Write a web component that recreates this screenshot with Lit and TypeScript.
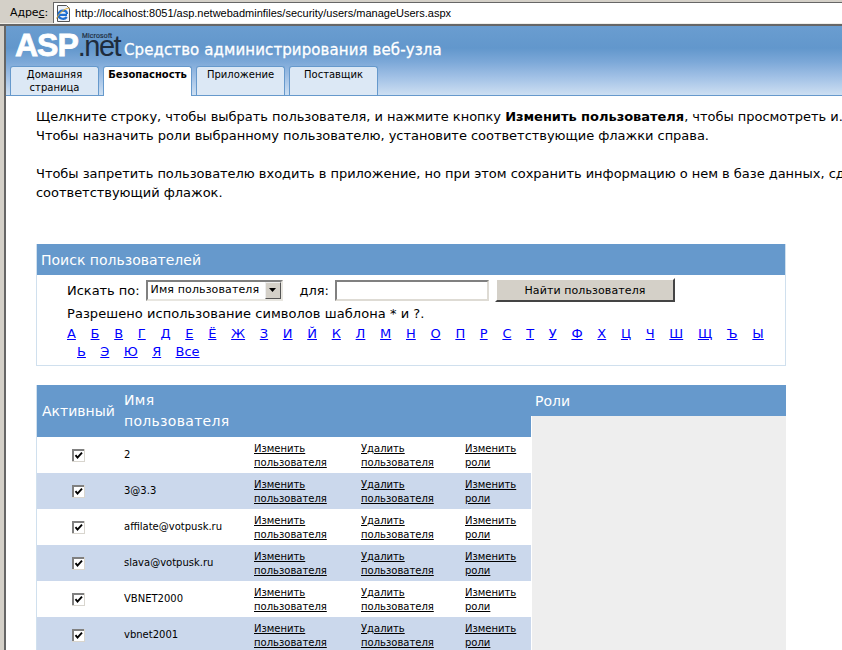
import { LitElement, html, css } from "lit";
import { customElement } from "lit/decorators.js";

const L1 = ["А","Б","В","Г","Д","Е","Ё","Ж","З","И","Й","К","Л","М","Н","О","П","Р","С","Т","У","Ф","Х","Ц","Ч","Ш","Щ","Ъ","Ы"];
const L2 = ["Ь","Э","Ю","Я","Все"];
const USERS = ["2","3@3.3","affilate@votpusk.ru","slava@votpusk.ru","VBNET2000","vbnet2001"];

@customElement("app-root")
export class AppRoot extends LitElement {
  static styles = css`
    :host { display: block; width: 842px; height: 650px; overflow: hidden; background: #d4d0c8;
      font-family: "DejaVu Sans", Verdana, sans-serif; font-size: 13px; letter-spacing: -.03px; color: #000; }
    .addr { height: 23px; background: #d4d0c8; display: flex; padding: 2px 0 0 10px; box-sizing: border-box; gap: 5px; }
    .addr-label { font-size: 11px; line-height: 21px; letter-spacing: -.1px; }
    .addr-label u { text-decoration: underline; }
    .addr-box { flex: 1; height: 21px; box-sizing: border-box; background: #fff; border-top: 1px solid #666; border-left: 1px solid #666; display: flex; align-items: center; gap: 3px; padding-left: 1px; font: 11px "Liberation Sans", sans-serif; letter-spacing: 0; }
    .sep { height: 3px; background: #efeee9; border-bottom: 2px solid #666; box-sizing: border-box; }
    .page { padding-left: 4px; background: #d4d0c8; }
    .frame { border-left: 2px solid #666; background: #fff; height: 624px; overflow: hidden; }
    .head { height: 70px; background: linear-gradient(#6a9dd0 0, #6297cc 32%, #7ca8d8 52%, #a3c2e6 75%, #cddff2 100%); border-bottom: 1px solid #6699cc; box-sizing: border-box; display: flex; flex-direction: column; justify-content: space-between; }
    .brand { display: flex; align-items: flex-end; padding-left: 9px; height: 34px; box-sizing: border-box; }
    .logo { position: relative; display: block; width: 109px; height: 30px; white-space: nowrap; flex: none; }
    .logo-asp { font: 900 32px/30px "Liberation Sans", sans-serif; color: #fff; letter-spacing: -1px; -webkit-text-stroke: .8px #fff; }
    .logo-net { font: 29px/30px "Liberation Sans", sans-serif; color: #1e2c3c; letter-spacing: -1.5px; }
    .logo-ms { position: absolute; left: 67px; top: 2px; font: 7px/7px "Liberation Sans", sans-serif; color: #1e2c3c; letter-spacing: .2px; -webkit-text-stroke: .2px #1e2c3c; }
    .title { color: #fff; font-size: 15px; line-height: 20px; letter-spacing: .1px; -webkit-text-stroke: .3px #fff; }
    .tabs { display: flex; gap: 4px; padding-left: 4px; height: 29px; }
    .tab { width: 89px; height: 29px; background: #dce8f5; border: 1px solid #6699cc; border-bottom: none; border-radius: 3px 3px 0 0; box-sizing: border-box; text-align: center; font-size: 10px; line-height: 13px; padding-top: 1px; letter-spacing: 0; }
    .tab.active { background: #fff; font-weight: 700; height: 30px; }
    .body { padding: 11px 0 0 30px; width: 860px; }
    p { margin: 0; white-space: nowrap; line-height: 19px; }
    .gap { height: 19px; }
    .panel { width: 750px; border: 1px solid #d0e0ee; border-top: none; margin-top: 42px; box-sizing: border-box; }
    .bar { background: #6699cc; color: #fff; font-size: 14px; height: 31px; line-height: 32px; padding-left: 4px; letter-spacing: 0; }
    .form { padding: 3px 0 4px 0; }
    .line1 { display: flex; align-items: center; height: 24px; padding-left: 30px; }
    .select { width: 137px; height: 21px; box-sizing: border-box; margin-left: 6px; border: 2px solid; border-color: #808080 #e8e6e0 #e8e6e0 #808080; background: #fff; display: flex; justify-content: space-between; font-size: 11px; line-height: 16px; padding-left: 3px; letter-spacing: .12px; }
    .arrow { width: 16px; height: 17px; box-sizing: border-box; background: #d4d0c8; border: 1px solid; border-color: #eee #555 #555 #eee; display: flex; align-items: center; justify-content: center; }
    .for { margin: 0 6px 0 17px; }
    input[type=text] { width: 154px; height: 21px; box-sizing: border-box; border: 2px solid; border-color: #808080 #dedbd4 #dedbd4 #808080; padding: 0; outline: none; }
    button { width: 180px; height: 24px; box-sizing: border-box; background: #d4d0c8; border: 2px solid; border-color: #fff #444 #444 #fff; font: 11px "DejaVu Sans", sans-serif; letter-spacing: .1px; margin-left: 6px; color: #000; padding: 0; }
    .hint { padding-left: 30px; height: 20px; line-height: 20px; margin-top: 2px; letter-spacing: .05px; }
    .letters { display: flex; justify-content: space-between; height: 19px; line-height: 19px; padding: 0 21px 0 30px; }
    .letters a, .letters2 a { color: #0000ff; text-decoration: underline; font-size: 13px; }
    .letters2 { display: flex; gap: 14.4px; height: 18px; line-height: 18px; padding-left: 40px; }
    .grid { display: grid; grid-template-columns: 495px 255px; width: 750px; margin-top: 19px; }
    table { border-collapse: separate; border-spacing: 0; width: 495px; table-layout: fixed; border-left: 1px solid #d0e0ee; }
    .c1 { width: 87px; } .c2 { width: 130px; } .c3 { width: 107px; } .c4 { width: 104px; }
    th { background: #6699cc; color: #fff; font-weight: 400; font-size: 14px; height: 52px; padding: 0; text-align: left; line-height: 21px; letter-spacing: 0; }
    th.name { letter-spacing: .3px; }
    th.act { padding-left: 5px; white-space: nowrap; }
    td { height: 36px; padding: 0; font-size: 10px; line-height: 14px; vertical-align: middle; letter-spacing: 0; }
    tr.alt td { background: #cbd8ec; }
    td a { color: #000; text-decoration: underline; display: block; padding-top: 1px; }
    td.c { text-align: center; padding-right: 4px; }
    .cb { display: inline-block; width: 13px; height: 13px; vertical-align: middle; }
    .roles { display: flex; flex-direction: column; }
    .roles .rb { background: #6699cc; color: #fff; font-size: 14px; height: 31px; line-height: 32px; padding-left: 4px; letter-spacing: 0; }
    .roles .rest { flex: 1; margin-left: 1px; background: #eeeeee; }
  `;

  private checkbox() {
    return html`<svg class="cb" width="13" height="13" viewBox="0 0 13 13">
      <rect width="13" height="13" fill="#d8d5ce"/>
      <rect width="12" height="12" fill="#808080"/>
      <rect x="2" y="2" width="10" height="10" fill="#fff"/>
      <path d="M3.5 6.2 L5.5 8.6 L10 3.6" fill="none" stroke="#000" stroke-width="1.9"/>
    </svg>`;
  }

  render() {
    return html`
      <div class="addr">
        <span class="addr-label">Адре<u>с</u>:</span>
        <div class="addr-box">
          <svg width="17" height="17" viewBox="0 0 17 17">
            <path d="M2.5.5h9l3 3v13h-12z" fill="#eef3fa" stroke="#555"/>
            <path d="M3 9.8h9M12 9c-.2-4.4-7.6-4.8-8.6.4-.6 4 5.6 6 8.4 2.6" stroke="#1f6fd0" stroke-width="2.2" fill="none"/>
            <path d="M1.5 13.5c3-6 8-10 13-10.5" stroke="#e2a92f" stroke-width="1" fill="none"/>
          </svg>
          <span>http://localhost:8051/asp.netwebadminfiles/security/users/manageUsers.aspx</span>
        </div>
      </div>
      <div class="sep"></div>
      <div class="page">
        <div class="frame">
          <div class="head">
            <div class="brand">
              <span class="logo"><span class="logo-asp">ASP</span><span class="logo-net">.net</span><span class="logo-ms">Microsoft</span></span>
              <span class="title">Средство администрирования веб-узла</span>
            </div>
            <div class="tabs">
              <div class="tab">Домашняя<br />страница</div>
              <div class="tab active">Безопасность</div>
              <div class="tab">Приложение</div>
              <div class="tab">Поставщик</div>
            </div>
          </div>
          <div class="body">
            <p>Щелкните строку, чтобы выбрать пользователя, и нажмите кнопку <b>Изменить пользователя</b>, чтобы просмотреть и.</p>
            <p>Чтобы назначить роли выбранному пользователю, установите соответствующие флажки справа.</p>
            <div class="gap"></div>
            <p>Чтобы запретить пользователю входить в приложение, но при этом сохранить информацию о нем в базе данных, сдо</p>
            <p>соответствующий флажок.</p>
            <div class="panel">
              <div class="bar">Поиск пользователей</div>
              <div class="form">
                <div class="line1">
                  <span>Искать по:</span>
                  <div class="select"><span>Имя пользователя</span><span class="arrow"><svg width="7" height="4" viewBox="0 0 7 4"><path d="M0 0h7L3.5 4z" fill="#000"/></svg></span></div>
                  <span class="for">для:</span>
                  <input type="text" />
                  <button>Найти пользователя</button>
                </div>
                <div class="hint">Разрешено использование символов шаблона * и ?.</div>
                <div class="letters">${L1.map((l) => html`<a>${l}</a>`)}</div>
                <div class="letters2">${L2.map((l) => html`<a>${l}</a>`)}</div>
              </div>
            </div>
            <div class="grid">
              <table>
                <colgroup><col class="c1" /><col class="c2" /><col class="c3" /><col class="c4" /><col /></colgroup>
                <thead><tr><th class="act">Активный</th><th class="name">Имя<br />пользователя</th><th></th><th></th><th></th></tr></thead>
                <tbody>
                  ${USERS.map((u, i) => html`<tr class=${i % 2 ? "alt" : ""}>
                    <td class="c">${this.checkbox()}</td>
                    <td>${u}</td>
                    <td><a>Изменить<br />пользователя</a></td>
                    <td><a>Удалить<br />пользователя</a></td>
                    <td><a>Изменить<br />роли</a></td>
                  </tr>`)}
                </tbody>
              </table>
              <div class="roles"><div class="rb">Роли</div><div class="rest"></div></div>
            </div>
          </div>
        </div>
      </div>
    `;
  }
}
